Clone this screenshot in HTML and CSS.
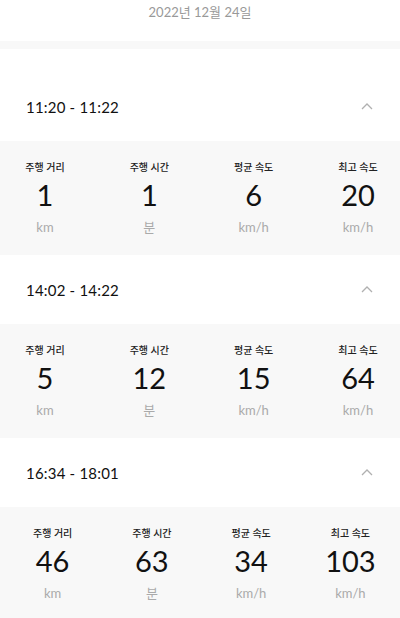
FILE: index.html
```html
<!DOCTYPE html>
<html lang="ko">

<head>
    <meta charset="UTF-8">
    <meta name="viewport" content="width=device-width, initial-scale=1.0">
    <title>주행 기록</title>
    <link rel="stylesheet" href="styles.css">
</head>

<body>
    <div class="date">2022년 12월 24일</div>
    <div class="divider"></div>

    <div class="trip-list">
        <div class="trip">
            <div class="trip-head">
                <span class="trip-time">11:20 - 11:22</span>
                <svg class="chevron" width="12" height="7" viewBox="0 0 12 7">
                    <path d="M1 6 L6 1 L11 6" fill="none" stroke="#b0b0b0" stroke-width="1.3" />
                </svg>
            </div>
            <div class="stats">
                <div class="stat">
                    <div class="stat-label">주행 거리</div>
                    <div class="stat-value">1</div>
                    <div class="stat-unit">km</div>
                </div>
                <div class="stat">
                    <div class="stat-label">주행 시간</div>
                    <div class="stat-value">1</div>
                    <div class="stat-unit">분</div>
                </div>
                <div class="stat">
                    <div class="stat-label">평균 속도</div>
                    <div class="stat-value">6</div>
                    <div class="stat-unit">km/h</div>
                </div>
                <div class="stat">
                    <div class="stat-label">최고 속도</div>
                    <div class="stat-value">20</div>
                    <div class="stat-unit">km/h</div>
                </div>
            </div>
        </div>

        <div class="trip">
            <div class="trip-head">
                <span class="trip-time">14:02 - 14:22</span>
                <svg class="chevron" width="12" height="7" viewBox="0 0 12 7">
                    <path d="M1 6 L6 1 L11 6" fill="none" stroke="#b0b0b0" stroke-width="1.3" />
                </svg>
            </div>
            <div class="stats">
                <div class="stat">
                    <div class="stat-label">주행 거리</div>
                    <div class="stat-value">5</div>
                    <div class="stat-unit">km</div>
                </div>
                <div class="stat">
                    <div class="stat-label">주행 시간</div>
                    <div class="stat-value">12</div>
                    <div class="stat-unit">분</div>
                </div>
                <div class="stat">
                    <div class="stat-label">평균 속도</div>
                    <div class="stat-value">15</div>
                    <div class="stat-unit">km/h</div>
                </div>
                <div class="stat">
                    <div class="stat-label">최고 속도</div>
                    <div class="stat-value">64</div>
                    <div class="stat-unit">km/h</div>
                </div>
            </div>
        </div>

        <div class="trip">
            <div class="trip-head">
                <span class="trip-time">16:34 - 18:01</span>
                <svg class="chevron" width="12" height="7" viewBox="0 0 12 7">
                    <path d="M1 6 L6 1 L11 6" fill="none" stroke="#b0b0b0" stroke-width="1.3" />
                </svg>
            </div>
            <div class="stats stats-even">
                <div class="stat">
                    <div class="stat-label">주행 거리</div>
                    <div class="stat-value">46</div>
                    <div class="stat-unit">km</div>
                </div>
                <div class="stat">
                    <div class="stat-label">주행 시간</div>
                    <div class="stat-value">63</div>
                    <div class="stat-unit">분</div>
                </div>
                <div class="stat">
                    <div class="stat-label">평균 속도</div>
                    <div class="stat-value">34</div>
                    <div class="stat-unit">km/h</div>
                </div>
                <div class="stat">
                    <div class="stat-label">최고 속도</div>
                    <div class="stat-value">103</div>
                    <div class="stat-unit">km/h</div>
                </div>
            </div>
        </div>
    </div>
</body>

</html>
```

FILE: styles.css
```css
body {
    margin: 0;
    background-color: #fff;
    font-family: Lato, "Noto Sans CJK KR", sans-serif;
    color: #111;
}

.date {
    height: 41px;
    line-height: 24px;
    text-align: center;
    font-size: 13px;
    color: #999;
}

.divider {
    height: 8px;
    background-color: #f8f8f8;
}

.trip-list {
    padding-top: 23px;
}

.trip-head {
    height: 69px;
    display: flex;
    align-items: center;
    justify-content: space-between;
    padding: 0 27px 0 26px;
}

.trip-time {
    font-size: 15px;
    letter-spacing: 0.2px;
    color: #111;
}

.chevron {
    display: block;
}

.stats {
    height: 114px;
    background-color: #f8f8f8;
    display: flex;
    justify-content: space-between;
    padding: 0 22px 0 25px;
}

.stats-even {
    display: grid;
    grid-template-columns: repeat(4, 1fr);
    padding: 0 0 0 3px;
}

.stat {
    width: 40px;
    display: flex;
    flex-direction: column;
    align-items: center;
    white-space: nowrap;
}

.stats-even .stat {
    width: auto;
}

.stat-label {
    margin-top: 18px;
    line-height: 16px;
    font-size: 10px;
    font-weight: 500;
    color: #222;
}

.stat-value {
    margin-top: 4px;
    line-height: 32px;
    font-size: 29px;
    color: #111;
}

.stat-unit {
    margin-top: 7px;
    line-height: 18px;
    font-size: 13px;
    color: #aaa;
}
```
